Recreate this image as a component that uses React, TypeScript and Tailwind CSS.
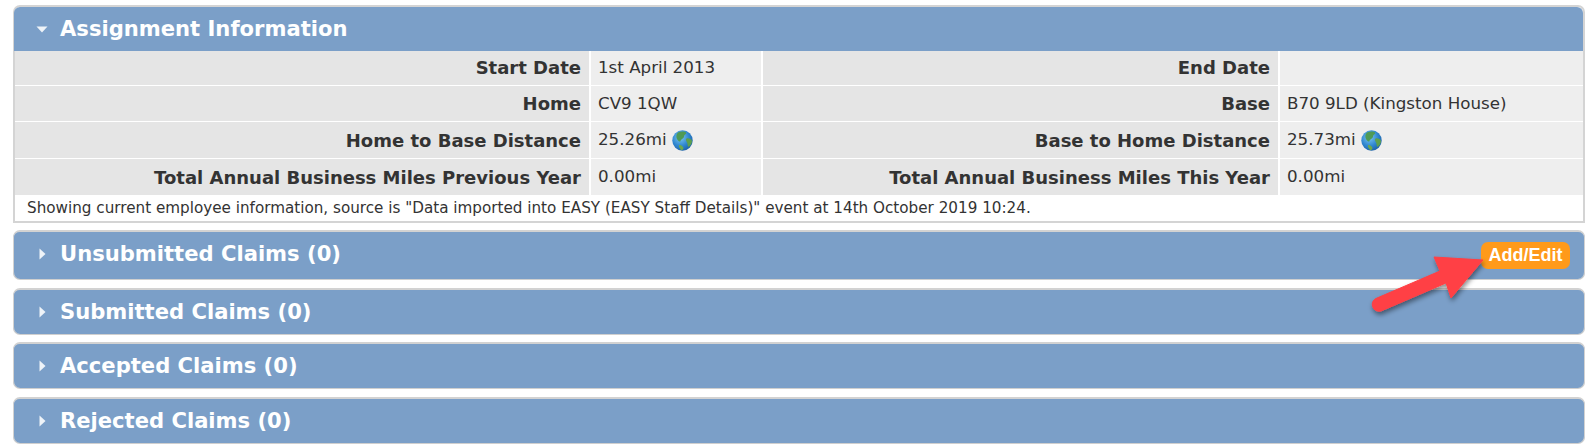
import React from "react";

function Globe() {
  return (
    <svg width="21" height="21" viewBox="0 0 21 21" className="inline-block shrink-0">
      <defs>
        <radialGradient id="sea" cx="40%" cy="35%" r="70%">
          <stop offset="0%" stopColor="#7cc8f0" />
          <stop offset="60%" stopColor="#2f86cf" />
          <stop offset="100%" stopColor="#1c5fa6" />
        </radialGradient>
      </defs>
      <circle cx="10.5" cy="10.5" r="10.2" fill="url(#sea)" />
      <path d="M6 2.5 C9 1 13 1.2 14 2.5 C15 4 12 4.5 12 6.5 C12 8.5 9 9 8.5 11 C8 12.5 6 11 5 9 C4 7 4 4.5 6 2.5Z" fill="#4f9a55" />
      <path d="M14.5 8.5 C16.5 8 19.5 9 20 11 C20 14 18 16 16.5 17 C15 15.5 16 13.5 14.8 12 C14 10.8 13.5 9.2 14.5 8.5Z" fill="#5da04e" />
      <path d="M7 15 C9 14.5 11 16 11.5 18 C11.5 19.5 10 20.5 9 20 C8 18.5 6.5 17 7 15Z" fill="#6aa84f" />
    </svg>
  );
}

function Row({ a, b, c, d, h, labelPad = "" }: { a: string; b: React.ReactNode; c: string; d: React.ReactNode; h: string; labelPad?: string }) {
  const label = `flex items-center justify-end pr-[8px] font-bold text-[18px] bg-[#e5e5e5] border-r-2 border-white ${labelPad}`;
  const value = "flex items-center gap-[5px] pl-[7px] bg-[#eeeeee] border-r-2 border-white";
  return (
    <div className={`grid grid-cols-[576px_172px_517px_1fr] ${h}`}>
      <div className={label}>{a}</div>
      <div className={value}>{b}</div>
      <div className={label}>{c}</div>
      <div className="flex items-center gap-[5px] pl-[7px] bg-[#eeeeee]">{d}</div>
    </div>
  );
}

function Collapsed({ title, h, mt, lift = "", children }: { title: string; h: string; mt: string; lift?: string; children?: React.ReactNode }) {
  return (
    <div className={`${h} ${mt} flex items-center justify-between rounded-[7px] bg-[#7b9fc8] border-t-2 border-x border-[#d2d2d2] shadow-[0_1px_0_#cfcfcf] pl-[25px] pr-[14px]`}>
      <div className={`flex items-center gap-[14px] ${lift}`}>
        <svg width="7" height="12" viewBox="0 0 7 12"><path d="M0.5 0.5 L6.5 6 L0.5 11.5Z" fill="#eef3f8" /></svg>
        <span className="text-[21.1px] font-bold text-white">{title}</span>
      </div>
      {children}
    </div>
  );
}

export default function App() {
  return (
    <div className="relative w-[1594px] h-[448px] overflow-hidden bg-white text-[#333333] font-['DejaVu_Sans','Liberation_Sans',sans-serif] text-[16.7px] pl-[13px] pr-[9px] pt-[5px]">
      <div className="rounded-t-[7px] border-x-2 border-t-2 border-[#d4d4d4] border-b-0">
        <div className="h-[44px] -ml-[1px] flex items-center pl-[22px] gap-[12px] bg-[#7b9fc8] rounded-t-[6px]">
          <svg width="12" height="7" viewBox="0 0 12 7"><path d="M0.5 0.5 H11.5 L6 6.5Z" fill="#eef3f8" /></svg>
          <span className="text-[21.1px] font-bold text-white">Assignment Information</span>
        </div>
        <Row h="h-[35px] border-b border-white" labelPad="pb-[2px]" a="Start Date" b="1st April 2013" c="End Date" d="" />
        <Row h="h-[36px] border-b border-white" a="Home" b="CV9 1QW" c="Base" d="B70 9LD (Kingston House)" />
        <Row h="h-[37px] border-b border-white" a="Home to Base Distance" b={<>25.26mi <Globe /></>} c="Base to Home Distance" d={<>25.73mi <Globe /></>} />
        <Row h="h-[36px]" a="Total Annual Business Miles Previous Year" b="0.00mi" c="Total Annual Business Miles This Year" d="0.00mi" />
        <div className="h-[28px] flex items-center pl-[12px] text-[15.2px] border-b-2 border-[#d4d4d4]">
          Showing current employee information, source is "Data imported into EASY (EASY Staff Details)" event at 14th October 2019 10:24.
        </div>
      </div>
      <Collapsed title="Unsubmitted Claims (0)" h="h-[49px]" mt="mt-[7px]" lift="-mt-[3px]">
        <div className="h-[27px] w-[89px] flex items-center justify-center rounded-[7px] bg-[#ff9a1a] text-white font-bold text-[18px] font-['Liberation_Sans',sans-serif]">Add/Edit</div>
      </Collapsed>
      <Collapsed title="Submitted Claims (0)" h="h-[46px]" mt="mt-[9px]" />
      <Collapsed title="Accepted Claims (0)" h="h-[46px]" mt="mt-[8px]" />
      <Collapsed title="Rejected Claims (0)" h="h-[46px]" mt="mt-[9px]" />
      <svg className="absolute left-[1360px] top-[245px]" width="140" height="80" viewBox="1360 245 140 80">
        <defs>
          <filter id="arrowShadow" x="-20%" y="-20%" width="140%" height="150%">
            <feDropShadow dx="1" dy="3" stdDeviation="2.5" floodColor="#000" floodOpacity="0.45" />
          </filter>
        </defs>
        <path
          d="M1483 260 L1434 257 L1440 271 L1377 298 A5.5 5.5 0 0 0 1381 311 L1446 283 L1451 298 Z"
          fill="#ff4044"
          stroke="#ff4044"
          strokeLinejoin="round"
          filter="url(#arrowShadow)"
        />
      </svg>
    </div>
  );
}
